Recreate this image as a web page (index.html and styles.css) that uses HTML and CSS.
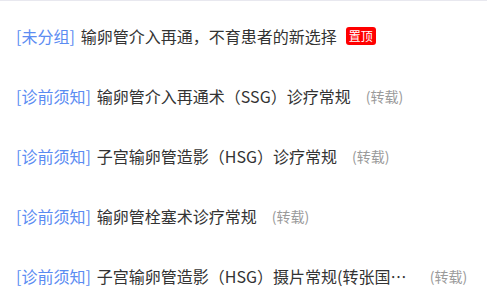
FILE: index.html
```html
<!DOCTYPE html>
<html lang="zh-CN">
<head>
<meta charset="utf-8">
<link rel="stylesheet" href="styles.css">
</head>
<body>
<ul class="list">
  <li class="item">
    <span class="group">[未分组]</span>
    <span class="title">输卵管介入再通，不育患者的新选择</span>
    <span class="badge">置顶</span>
  </li>
  <li class="item">
    <span class="group">[诊前须知]</span>
    <span class="title">输卵管介入再通术（SSG）诊疗常规</span>
    <span class="repost">(转载)</span>
  </li>
  <li class="item">
    <span class="group">[诊前须知]</span>
    <span class="title">子宫输卵管造影（HSG）诊疗常规</span>
    <span class="repost">(转载)</span>
  </li>
  <li class="item">
    <span class="group">[诊前须知]</span>
    <span class="title">输卵管栓塞术诊疗常规</span>
    <span class="repost">(转载)</span>
  </li>
  <li class="item">
    <span class="group">[诊前须知]</span>
    <span class="title">子宫输卵管造影（HSG）摄片常规(转张国福主任)</span>
    <span class="repost">(转载)</span>
  </li>
</ul>
</body>
</html>
```
FILE: styles.css
```css
html, body {
  margin: 0;
  padding: 0;
  background: #fff;
}
body {
  font-family: "Microsoft YaHei", "Noto Sans CJK SC", sans-serif;
  font-size: 16px;
  color: #333;
}
.list {
  list-style: none;
  margin: 0;
  padding: 5px 0 0 16px;
  border-top: 1px solid #e8e8ef;
}
.item {
  display: flex;
  align-items: center;
  height: 60px;
  white-space: nowrap;
}
.group {
  color: #5b8cf2;
  margin-right: 6px;
}
.title {
  color: #333;
  max-width: 318px;
  overflow: hidden;
  text-overflow: ellipsis;
}
.badge {
  margin-left: 9px;
  background: #f00;
  color: #fff;
  font-size: 12px;
  line-height: 18px;
  height: 18px;
  padding: 0 3px;
  border-radius: 3px;
}
.repost {
  margin-left: 15px;
  color: #9a9a9a;
  font-size: 14px;
}
```
